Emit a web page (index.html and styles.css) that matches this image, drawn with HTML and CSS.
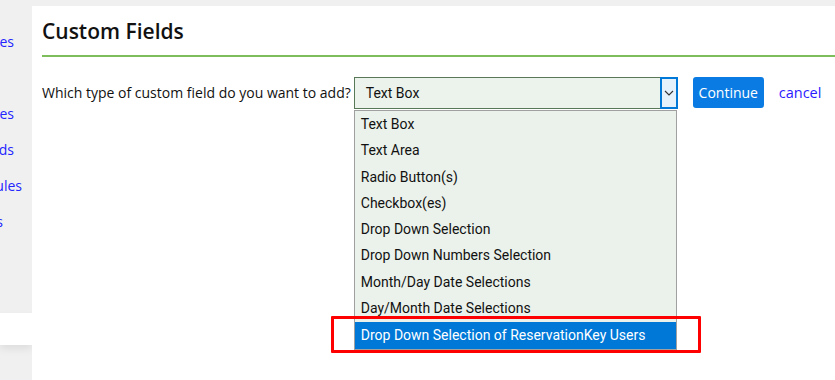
FILE: index.html
```html
<!DOCTYPE html>
<html lang="en">
<head>
    <meta charset="UTF-8">
    <title>Custom Fields</title>
    <link rel="stylesheet" href="styles.css">
</head>
<body>
<div class="page">
    <div class="side">
        <div class="side-top">
            <a class="nav-link nav-es" href="#">Properties</a>
            <span class="nav-gap"></span>
            <a class="nav-link nav-es" href="#">Rates</a>
            <a class="nav-link nav-es" href="#">Fields</a>
            <a class="nav-link nav-ules" href="#">Rules</a>
            <a class="nav-link nav-s" href="#">Users</a>
        </div>
        <div class="side-white"></div>
        <div class="side-bottom"></div>
    </div>
    <div class="main">
        <h1 class="title">Custom Fields</h1>
        <div class="add-row">
            <span class="question">Which type of custom field do you want to add?</span>
            <div class="picker">
                <div class="select">
                    <span class="select-text">Text Box</span>
                    <span class="select-btn">
                        <svg width="10" height="6" viewBox="0 0 10 6"><path d="M1 1 L5 5 L9 1" fill="none" stroke="#333" stroke-width="1.1"/></svg>
                    </span>
                </div>
                <ul class="options">
                    <li>Text Box</li>
                    <li>Text Area</li>
                    <li>Radio Button(s)</li>
                    <li>Checkbox(es)</li>
                    <li>Drop Down Selection</li>
                    <li>Drop Down Numbers Selection</li>
                    <li>Month/Day Date Selections</li>
                    <li>Day/Month Date Selections</li>
                    <li class="active">Drop Down Selection of ReservationKey Users</li>
                </ul>
                <div class="mark"></div>
            </div>
            <button class="btn">Continue</button>
            <a class="cancel" href="#">cancel</a>
        </div>
    </div>
</div>
</body>
</html>
```

FILE: styles.css
```css
* {
    padding: 0;
    margin: 0;
    box-sizing: border-box;
}

html, body {
    width: 100%;
    height: 100%;
    background-color: #f0f0f0;
    font-family: "Open Sans", "Noto Sans", sans-serif;
}

.page {
    display: flex;
    height: 100%;
}

.side {
    width: 32px;
    flex-shrink: 0;
    display: flex;
    flex-direction: column;
    overflow: hidden;
}

.side-top {
    height: 313px;
    display: flex;
    flex-direction: column;
    align-items: flex-end;
    padding-top: 31px;
}

.nav-link {
    height: 36px;
    line-height: 22px;
    font-size: 14px;
    color: #2424ff;
    text-decoration: none;
    white-space: nowrap;
}

.nav-gap {
    height: 36px;
}

.nav-es {
    margin-right: 18px;
}

.nav-ules {
    margin-right: 10px;
}

.nav-s {
    margin-right: 29px;
}

.side-white {
    height: 32px;
    background-color: #fff;
    box-shadow: 0 4px 8px rgba(0, 0, 0, 0.08);
}

.side-bottom {
    flex: 1;
}

.main {
    flex: 1;
    margin-top: 6px;
    background-color: #fff;
    padding-left: 10px;
}

.title {
    font-size: 21px;
    font-weight: 600;
    line-height: 28px;
    padding-top: 11px;
    padding-bottom: 10px;
    border-bottom: 2px solid #7dbd5c;
    color: #111;
}

.add-row {
    display: flex;
    align-items: flex-start;
    margin-top: 20px;
}

.question {
    font-size: 14px;
    line-height: 32px;
    color: #111;
    margin-right: 3px;
}

.picker {
    position: relative;
    width: 324px;
}

.select {
    display: flex;
    height: 32px;
    border: 1px solid #587858;
    background-color: #ecf3ec;
    font-family: Roboto, sans-serif;
    font-size: 14px;
}

.select-text {
    flex: 1;
    line-height: 30px;
    padding-left: 11px;
    color: #111;
}

.select-btn {
    width: 18px;
    border: 2px solid #0078d7;
    background-color: #e5f1fb;
    display: flex;
    align-items: center;
    justify-content: center;
    margin: -1px -1px -1px 0;
}

.options {
    list-style: none;
    width: 323px;
    margin-top: 1px;
    border: 1px solid #a0a0a0;
    background-color: #ebf2eb;
    font-family: Roboto, sans-serif;
    font-size: 14px;
    color: #111;
}

.options li {
    height: 26.25px;
    line-height: 26px;
    padding-left: 6px;
    white-space: nowrap;
}

.options li.active {
    height: 27px;
    margin-top: 1px;
    background-color: #0078d7;
    color: #fff;
}

.mark {
    position: absolute;
    left: -23px;
    top: 239px;
    width: 370px;
    height: 37px;
    border: 3px solid #f00;
    border-radius: 1px;
}

.btn {
    margin-left: 15px;
    height: 31px;
    width: 71px;
    border: none;
    border-radius: 3px;
    background-color: #0a7be3;
    color: #fff;
    font-family: "Open Sans", sans-serif;
    font-size: 14px;
}

.cancel {
    margin-left: 15px;
    line-height: 32px;
    font-size: 14.5px;
    color: #2a1cff;
    text-decoration: none;
}
```
